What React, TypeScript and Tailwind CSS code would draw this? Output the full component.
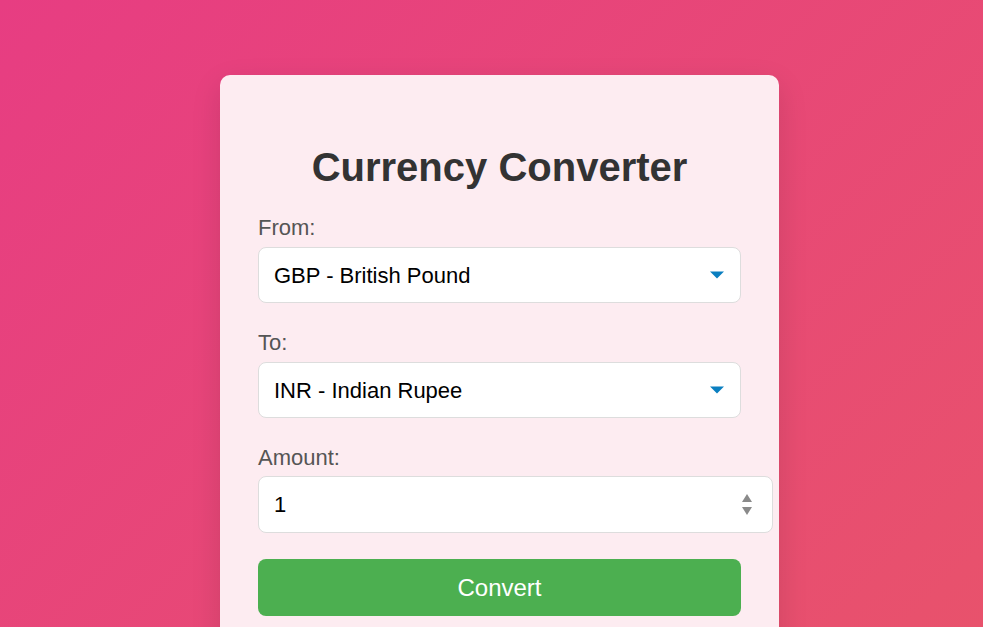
import { useState } from 'react'

const currencies = ['GBP - British Pound', 'INR - Indian Rupee', 'USD - US Dollar', 'EUR - Euro']

function Caret() {
  return (
    <svg width="16" height="10" viewBox="0 0 16 10" className="pointer-events-none absolute right-[15px] top-1/2 -translate-y-1/2">
      <path d="M1 1.5 L15 1.5 L8 8.5 Z" fill="#0a7fc0" />
    </svg>
  )
}

function Field({ label, value }: { label: string; value: string }) {
  return (
    <div className="mb-[26px]">
      <p className="mb-[6px] text-[22px] leading-[27px] text-[#555]">{label}</p>
      <div className="relative flex h-[56px] w-[483px] items-center rounded-lg border border-[#ddd] bg-white pl-[15px] text-[22px] text-black">
        {value}
        <Caret />
      </div>
    </div>
  )
}

export default function App() {
  const [amount] = useState('1')
  return (
    <main
      className="h-[627px] overflow-hidden bg-[linear-gradient(135deg,#e73d82_0%,#e8526c_100%)] pt-[75px]"
      style={{ fontFamily: '"Liberation Sans", Arial, sans-serif' }}
    >
      <section className="ml-[220px] h-[600px] w-[559px] rounded-[10px] bg-[#fdecf1] px-[38px] pt-[72px] shadow-[0_10px_30px_rgba(0,0,0,0.12)]">
        <h1 className="mb-[26px] text-center text-[40px] font-bold leading-[41px] text-[#333]">Currency Converter</h1>

        <Field label="From:" value={currencies[0]} />
        <Field label="To:" value={currencies[1]} />

        <div className="mb-[26px]">
          <p className="mb-[5px] text-[22px] leading-[27px] text-[#555]">Amount:</p>
          <div className="relative flex h-[57px] w-[515px] items-center rounded-lg border border-[#ddd] bg-white pl-[15px] text-[22px] text-black">
            {amount}
            <svg width="12" height="26" viewBox="0 0 12 26" className="absolute right-[19px] top-1/2 -translate-y-1/2">
              <path d="M1 10 L11 10 L6 2 Z" fill="#8a8a8a" />
              <path d="M1 15 L11 15 L6 23 Z" fill="#8a8a8a" />
            </svg>
          </div>
        </div>

        <button className="flex h-[57px] w-[483px] items-center justify-center rounded-lg bg-[#4caf50] text-[24px] text-white">
          Convert
        </button>
      </section>
    </main>
  )
}
